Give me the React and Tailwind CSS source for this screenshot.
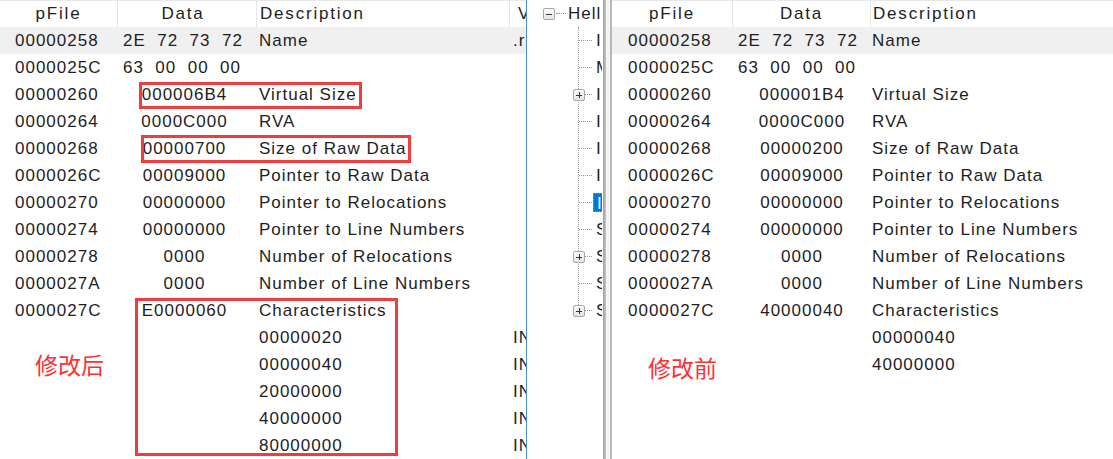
import React from "react";

const FONT = { fontFamily: '"Liberation Sans", Arial, sans-serif' };
const CJK = { fontFamily: '"Noto Sans CJK SC", "Noto Sans", sans-serif' };

const leftRows = [
  { p: "00000258", d: "2E  72  73  72", la: true, desc: "Name", v: ".rsrc" },
  { p: "0000025C", d: "63  00  00  00", la: true, desc: "", v: "" },
  { p: "00000260", d: "000006B4", desc: "Virtual Size" },
  { p: "00000264", d: "0000C000", desc: "RVA" },
  { p: "00000268", d: "00000700", desc: "Size of Raw Data" },
  { p: "0000026C", d: "00009000", desc: "Pointer to Raw Data" },
  { p: "00000270", d: "00000000", desc: "Pointer to Relocations" },
  { p: "00000274", d: "00000000", desc: "Pointer to Line Numbers" },
  { p: "00000278", d: "0000", desc: "Number of Relocations" },
  { p: "0000027A", d: "0000", desc: "Number of Line Numbers" },
  { p: "0000027C", d: "E0000060", desc: "Characteristics" },
  { p: "", d: "", desc: "00000020", v: "IN" },
  { p: "", d: "", desc: "00000040", v: "IN" },
  { p: "", d: "", desc: "20000000", v: "IN" },
  { p: "", d: "", desc: "40000000", v: "IN" },
  { p: "", d: "", desc: "80000000", v: "IN" },
];

const rightRows = [
  { p: "00000258", d: "2E  72  73  72", la: true, desc: "Name" },
  { p: "0000025C", d: "63  00  00  00", la: true, desc: "" },
  { p: "00000260", d: "000001B4", desc: "Virtual Size" },
  { p: "00000264", d: "0000C000", desc: "RVA" },
  { p: "00000268", d: "00000200", desc: "Size of Raw Data" },
  { p: "0000026C", d: "00009000", desc: "Pointer to Raw Data" },
  { p: "00000270", d: "00000000", desc: "Pointer to Relocations" },
  { p: "00000274", d: "00000000", desc: "Pointer to Line Numbers" },
  { p: "00000278", d: "0000", desc: "Number of Relocations" },
  { p: "0000027A", d: "0000", desc: "Number of Line Numbers" },
  { p: "0000027C", d: "40000040", desc: "Characteristics" },
  { p: "", d: "", desc: "00000040" },
  { p: "", d: "", desc: "40000000" },
];

const treeChildren = [
  { t: "I" },
  { t: "M" },
  { t: "I", plus: true },
  { t: "I" },
  { t: "I" },
  { t: "I" },
  { t: "I", sel: true },
  { t: "S" },
  { t: "S", plus: true },
  { t: "S" },
  { t: "S", plus: true },
];

function Sep() {
  return <div className="w-px self-stretch bg-[#e5e5e5]" />;
}

function LeftPane() {
  return (
    <div className="relative w-[526px] shrink-0 overflow-hidden bg-white">
      {/* header */}
      <div className="flex h-[27px] border-t border-[#e8e8e8] text-[17px] leading-[26px] text-[#1e1e1e] tracking-[1.8px]">
        <div className="w-[117px] shrink-0 text-center">pFile</div>
        <Sep />
        <div className="w-[138px] shrink-0 pr-[8px] text-center">Data</div>
        <Sep />
        <div className="w-[252px] shrink-0 pl-[3px]">Description</div>
        <Sep />
        <div className="w-[16px] shrink-0 overflow-hidden pl-[8px]">V</div>
      </div>
      {leftRows.map((r, i) => (
        <div
          key={i}
          className={`flex h-[27px] text-[17px] leading-[27px] text-[#1e1e1e] tracking-[1px] whitespace-pre ${
            i === 0 ? "bg-[#f0f0f0]" : ""
          }`}
        >
          <div className="w-[118px] shrink-0 pl-[15px]">{r.p}</div>
          <div className={`w-[139px] shrink-0 ${r.la ? "pl-[5px]" : "pr-[6px] text-center"}`}>{r.d}</div>
          <div className="w-[253px] shrink-0 pl-[2px]">{r.desc}</div>
          <div className="w-[16px] shrink-0 overflow-hidden pl-[3px]">{r.v || ""}</div>
        </div>
      ))}

      {/* annotation boxes */}
      <div className="pointer-events-none absolute left-[139px] top-[82px] h-[27px] w-[223px] border-[3px] border-[#f03c3c]" />
      <div className="pointer-events-none absolute left-[141px] top-[135px] h-[28px] w-[270px] border-[3px] border-[#f03c3c]" />
      <div className="pointer-events-none absolute left-[135px] top-[298px] h-[158px] w-[263px] border-[3px] border-[#f03c3c]" />
      <div
        className="absolute left-[35px] top-[349px] text-[23px] leading-[30px] text-[#ff3030]"
        style={CJK}
      >
        修改后
      </div>
    </div>
  );
}

function TreeBox({ minus }) {
  return (
    <div className="flex h-[12px] w-[12px] items-center justify-center rounded-[2px] border border-[#a8a8a8] bg-gradient-to-b from-white to-[#e4e4e4]">
      <div className="relative h-[1px] w-[6px] bg-[#333]">
        {!minus && <div className="absolute left-[2.5px] top-[-2.5px] h-[6px] w-[1px] bg-[#333]" />}
      </div>
    </div>
  );
}

function TreePane() {
  return (
    <div className="relative w-[76px] shrink-0 overflow-hidden bg-white text-[17px] tracking-[1px] text-[#1e1e1e]">
      {/* vertical dotted guide */}
      <div className="absolute left-[51px] top-[27px] h-[284px] border-l border-dotted border-[#9a9a9a]" />
      {/* root */}
      <div className="relative h-[27px]">
        <div className="absolute left-[16px] top-[8px]">
          <TreeBox minus />
        </div>
        <div className="absolute left-[29px] top-[13px] w-[10px] border-t border-dotted border-[#9a9a9a]" />
        <div className="absolute left-[41px] top-0 w-[33px] overflow-hidden whitespace-nowrap leading-[27px]">Hell</div>
      </div>
      {treeChildren.map((c, i) => (
        <div key={i} className="relative h-[27px]">
          <div className="absolute left-[52px] top-[13px] w-[13px] border-t border-dotted border-[#9a9a9a]" />
          {c.plus && (
            <div className="absolute left-[46px] top-[8px]">
              <TreeBox />
            </div>
          )}
          <div
            className={`absolute left-[66px] top-[4px] h-[19px] w-[9px] overflow-hidden whitespace-nowrap pl-[3px] leading-[19px] ${
              c.sel ? "border border-r-0 border-dotted border-[#e08a2a] bg-[#0078d7] pl-[2px] leading-[17px] text-white" : ""
            }`}
          >
            {c.t}
          </div>
        </div>
      ))}
    </div>
  );
}

function RightPane() {
  return (
    <div className="relative flex-1 overflow-hidden bg-white">
      <div className="flex h-[27px] border-t border-[#e8e8e8] text-[17px] leading-[26px] text-[#1e1e1e] tracking-[1.8px]">
        <div className="w-[120px] shrink-0 text-center">pFile</div>
        <Sep />
        <div className="w-[137px] shrink-0 text-center">Data</div>
        <Sep />
        <div className="flex-1 pl-[2px]">Description</div>
      </div>
      {rightRows.map((r, i) => (
        <div
          key={i}
          className={`flex h-[27px] text-[17px] leading-[27px] text-[#1e1e1e] tracking-[1px] whitespace-pre ${
            i === 0 ? "bg-[#f0f0f0]" : ""
          }`}
        >
          <div className="w-[121px] shrink-0 pl-[16px]">{r.p}</div>
          <div className={`w-[138px] shrink-0 ${r.la ? "pl-[5px]" : "text-center"}`}>{r.d}</div>
          <div className="flex-1 pl-[1px]">{r.desc}</div>
        </div>
      ))}
      <div
        className="absolute left-[36px] top-[352px] text-[23px] leading-[30px] text-[#ff3030]"
        style={CJK}
      >
        修改前
      </div>
    </div>
  );
}

export default function App() {
  return (
    <div className="flex h-[459px] w-[1113px] overflow-hidden bg-white" style={FONT}>
      <LeftPane />
      <div className="w-px shrink-0 bg-[#4a8fd6]" />
      <TreePane />
      <div className="flex w-[9px] shrink-0">
        <div className="w-[3px] bg-gradient-to-r from-[#9c9c9c] to-[#c8c8c8]" />
        <div className="flex-1 bg-[#f4f4f4]" />
        <div className="w-[2px] bg-[#b8b8b8]" />
      </div>
      <RightPane />
    </div>
  );
}
